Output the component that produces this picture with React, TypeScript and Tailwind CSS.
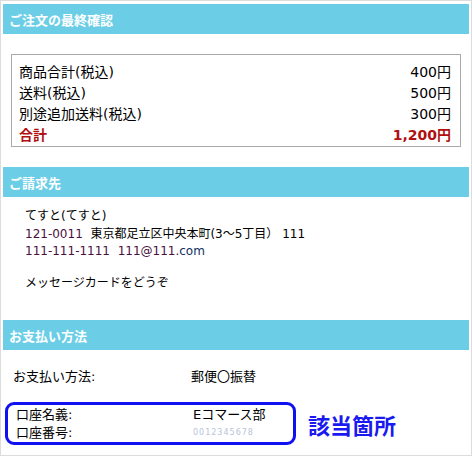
import React from "react";

const font = { fontFamily: '"DejaVu Sans", "Noto Sans CJK JP", sans-serif' };
const cjk = { fontFamily: '"Noto Sans CJK JP", "Noto Sans", sans-serif' };

function Header({ children }: { children: React.ReactNode }) {
  return (
    <div className="h-[30px] bg-[#6bcee6] flex items-center pl-[6px] text-white font-bold text-[13px] leading-none" style={cjk}>
      {children}
    </div>
  );
}

export default function App() {
  return (
    <div className="w-[472px] h-[457px] bg-white" style={font}>
      <div className="w-[472px] h-[456px] border border-[#dcdcdc] pt-[3px] px-[2px] text-black">
        <Header>ご注文の最終確認</Header>
        <div className="mx-[8px] mt-[20px] border border-[#a9a9a9] pl-[7px] pr-[9px] pt-[7px] pb-[0px] text-[14px] leading-[21px]">
          <div className="flex justify-between"><span>商品合計(税込)</span><span>400円</span></div>
          <div className="flex justify-between"><span>送料(税込)</span><span>500円</span></div>
          <div className="flex justify-between"><span>別途追加送料(税込)</span><span>300円</span></div>
          <div className="flex justify-between text-[#b01010] font-bold"><span>合計</span><span>1,200円</span></div>
        </div>
        <div className="mt-[20px]">
          <Header>ご請求先</Header>
        </div>
        <div className="pl-[22px] pt-[11px] text-[12px] leading-[17.5px]">
          <div>てすと(てすと)</div>
          <div>
            <span className="text-[#4a1040]">121-0011</span>&nbsp;&nbsp;東京都足立区中央本町(3～5丁目）&nbsp;111
          </div>
          <div className="text-[#4a1040]">111-111-1111&nbsp;&nbsp;111@111.<span className="text-[#103060]">com</span></div>
          <div className="mt-[14px]">メッセージカードをどうぞ</div>
        </div>
        <div className="mt-[28px]">
          <Header>お支払い方法</Header>
        </div>
        <div className="flex pl-[10px] pt-[18px] text-[13px] leading-[18px]">
          <span className="w-[178px]">お支払い方法:</span>
          <span>郵便〇振替</span>
        </div>
        <div className="flex items-center mt-[16px]">
          <div className="ml-[2px] w-[291px] h-[43px] border-[3px] border-[#1010f0] rounded-[9px] pl-[8px] flex flex-col justify-center text-[13px] leading-[18px]">
            <div className="flex"><span className="w-[177px]">口座名義:</span><span>Eコマース部</span></div>
            <div className="flex items-center"><span className="w-[177px]">口座番号:</span><span className="text-[8px] tracking-[1px] text-[#b8c4d8]">0012345678</span></div>
          </div>
          <div className="ml-[12px] text-[22px] font-bold text-[#1a1af0] leading-none" style={cjk}>該当箇所</div>
        </div>
      </div>
    </div>
  );
}
